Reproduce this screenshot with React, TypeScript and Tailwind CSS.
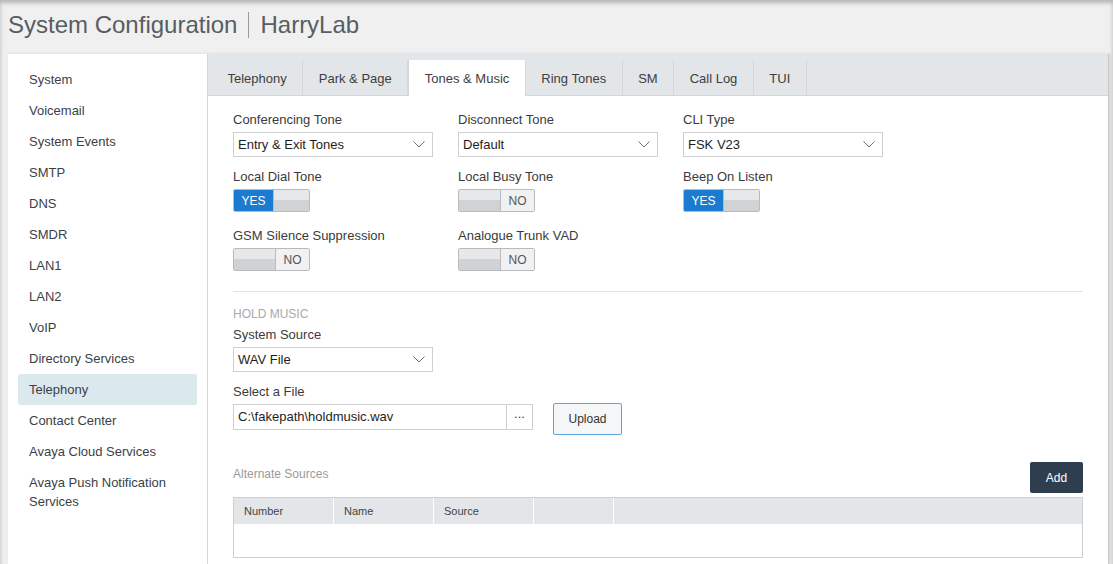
const MENU = [
  'System', 'Voicemail', 'System Events', 'SMTP', 'DNS', 'SMDR', 'LAN1', 'LAN2', 'VoIP',
  'Directory Services', 'Telephony', 'Contact Center', 'Avaya Cloud Services',
  'Avaya Push Notification Services',
]

const TABS = ['Telephony', 'Park & Page', 'Tones & Music', 'Ring Tones', 'SM', 'Call Log', 'TUI']

function Select({ value }: { value: string }) {
  return (
    <div className="flex h-[25px] w-[200px] items-center justify-between border border-[#cfcfcf] bg-white pl-[4px] pr-[7px] text-[13px] text-[#1e1e1e]">
      <span>{value}</span>
      <svg width="12" height="7" viewBox="0 0 12 7" className="text-[#6f6f6f]">
        <polyline points="0.5,0.5 6,6 11.5,0.5" fill="none" stroke="currentColor" strokeWidth="1" />
      </svg>
    </div>
  )
}

function Toggle({ on }: { on: boolean }) {
  const off = 'bg-[linear-gradient(to_bottom,#e7e8e9_50%,#d0d2d4_50%)]'
  return (
    <div className="flex h-[23px] w-[77px] overflow-hidden rounded-[2px] border border-[#b8bbbe] text-[12px]">
      {on ? (
        <>
          <div className="flex w-[39px] items-center justify-center bg-[#1a7bd1] text-white">YES</div>
          <div className={`flex-1 border-l border-[#b8bbbe] ${off}`} />
        </>
      ) : (
        <>
          <div className={`w-[41px] ${off}`} />
          <div className="flex flex-1 items-center justify-center border-l border-[#b8bbbe] bg-[#f0f1f2] text-[#555]">NO</div>
        </>
      )}
    </div>
  )
}

function Field({ label, children }: { label: string; children: React.ReactNode }) {
  return (
    <div className="flex flex-col gap-[4px]">
      <div className="h-[16px] text-[13px] leading-[16px] text-[#3b3b3b]">{label}</div>
      {children}
    </div>
  )
}

export default function App() {
  return (
    <div className="flex h-[564px] flex-col overflow-hidden bg-[#f0f0f0] font-['Liberation_Sans',Arial,sans-serif] shadow-[inset_0_3px_4px_rgba(0,0,0,0.25)]">
      {/* Header */}
      <div className="flex h-[54px] shrink-0 items-center px-2 pb-[4px] text-[24px] text-[#585d63]">
        <span>System Configuration</span>
        <span className="mx-[11px] h-[26px] w-px bg-[#9a9a9a]" />
        <span>HarryLab</span>
      </div>

      <div className="flex flex-1 pl-2 pr-[4px]">
        {/* Sidebar */}
        <aside className="w-[200px] shrink-0 border-r border-[#dcdcdc] bg-white px-[10px] pt-[10px] shadow-[0_-1px_2px_rgba(0,0,0,0.06)]">
          <ul>
            {MENU.map((item) => (
              <li
                key={item}
                className={`rounded-[2px] px-[11px] py-[6px] text-[13px] leading-[19px] text-[#3b3f47] ${item === 'Telephony' ? 'bg-[#dbe9ef]' : ''}`}
              >
                {item}
              </li>
            ))}
          </ul>
        </aside>

        {/* Content panel */}
        <main className="flex w-[901px] flex-col border-r border-[#c8c8c8] bg-white shadow-[1px_0_3px_rgba(0,0,0,0.12)]">
          <div className="flex h-[42px] shrink-0 items-end border-b border-[#d3d7da] bg-[#e2e6e9] pl-1">
            {TABS.map((t) => (
              <div
                key={t}
                className={`-mb-px flex h-[36px] items-center px-[15.5px] pt-[2px] text-[13px] text-[#3e3e3e] ${t === 'Tones & Music' ? 'border-x border-[#d3d7da] bg-white' : 'border-r border-[#d3d7da]'}`}
              >
                {t}
              </div>
            ))}
          </div>

          <div className="flex flex-col px-[25px] pt-[16px]">
            <div className="grid grid-cols-[200px_200px_200px] gap-x-[25px]">
              <Field label="Conferencing Tone"><Select value="Entry & Exit Tones" /></Field>
              <Field label="Disconnect Tone"><Select value="Default" /></Field>
              <Field label="CLI Type"><Select value="FSK V23" /></Field>
            </div>
            <div className="mt-[12px] grid grid-cols-[200px_200px_200px] gap-x-[25px]">
              <Field label="Local Dial Tone"><Toggle on /></Field>
              <Field label="Local Busy Tone"><Toggle on={false} /></Field>
              <Field label="Beep On Listen"><Toggle on /></Field>
            </div>
            <div className="mt-[16px] grid grid-cols-[200px_200px_200px] gap-x-[25px]">
              <Field label="GSM Silence Suppression"><Toggle on={false} /></Field>
              <Field label="Analogue Trunk VAD"><Toggle on={false} /></Field>
            </div>

            <div className="mt-[20px] h-px bg-[#e3e3e3]" />

            <div className="mt-[15px] text-[12px] leading-[14px] text-[#a9a9a9]">HOLD MUSIC</div>
            <div className="mt-[6px]">
              <Field label="System Source"><Select value="WAV File" /></Field>
            </div>
            <div className="mt-[12px] flex items-end">
              <Field label="Select a File">
                <div className="flex h-[26px] w-[300px] border border-[#cfcfcf] text-[13px]">
                  <div className="flex flex-1 items-center pl-[4px] text-[#1e1e1e]">C:\fakepath\holdmusic.wav</div>
                  <div className="flex w-[26px] items-center justify-center border-l border-[#cfcfcf] pb-[6px] text-[#444]">...</div>
                </div>
              </Field>
              <button className="mb-[-5px] ml-[20px] h-[32px] w-[69px] rounded-[2px] border border-[#5aa7df] bg-[#f4f6f7] text-[12px] text-[#333]">
                Upload
              </button>
            </div>

            <div className="mt-[32px] flex items-end justify-between">
              <span className="mb-[10px] text-[12px] text-[#9a9a9a]">Alternate Sources</span>
              <button className="h-[31px] w-[53px] rounded-[2px] bg-[#2e3e4f] text-[12px] text-white">Add</button>
            </div>
            <div className="mt-[4px] border border-[#cfcfcf]">
              <div className="flex h-[26px] bg-[#e3e6e9] text-[11px] text-[#444]">
                <div className="flex w-[100px] items-center border-r border-white pl-[10px]">Number</div>
                <div className="flex w-[100px] items-center border-r border-white pl-[10px]">Name</div>
                <div className="flex w-[100px] items-center border-r border-white pl-[10px]">Source</div>
                <div className="w-[80px] border-r border-white" />
                <div className="flex-1" />
              </div>
              <div className="h-[33px]" />
            </div>
          </div>
        </main>
      </div>
    </div>
  )
}
